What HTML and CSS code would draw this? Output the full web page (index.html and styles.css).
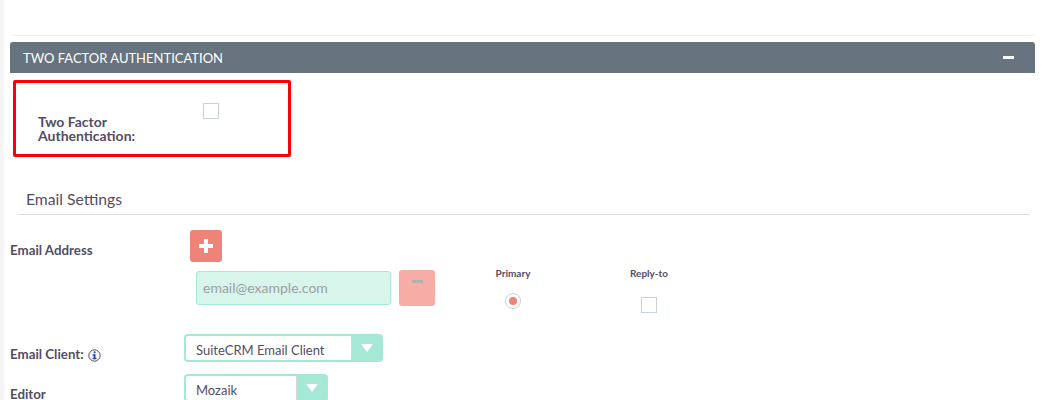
FILE: index.html
```html
<!DOCTYPE html>
<html lang="en">
<head>
    <meta charset="UTF-8">
    <title>Two Factor Authentication</title>
    <link rel="stylesheet" href="styles.css">
</head>
<body>
    <div class="page">
        <div class="top-panel"></div>

        <div class="panel-heading">
            <span>TWO FACTOR AUTHENTICATION</span>
            <span class="collapse-icon"></span>
        </div>

        <div class="highlight-box">
            <label class="factor-label">Two Factor Authentication:</label>
            <span class="check factor-check"></span>
        </div>

        <h2 class="section-title">Email Settings</h2>

        <div class="address-row">
            <div class="row-label address-label">Email Address</div>
            <div class="address-fields">
                <button class="btn-add" type="button">
                    <svg width="16" height="16" viewBox="0 0 16 16"><path d="M6 1h4v5h5v4h-5v5H6v-5H1V6h5z" fill="#fff"/></svg>
                </button>
                <div class="address-line">
                    <div class="email-input">email@example.com</div>
                    <button class="btn-remove" type="button"><span></span></button>
                    <div class="flag-col primary-col">
                        <div class="flag-title">Primary</div>
                        <span class="radio"><span></span></span>
                    </div>
                    <div class="flag-col reply-col">
                        <div class="flag-title">Reply-to</div>
                        <span class="check"></span>
                    </div>
                </div>
            </div>
        </div>

        <div class="select-row client-row">
            <div class="row-label">
                Email Client:
                <svg class="info-icon" width="13" height="13" viewBox="0 0 13 13">
                    <circle cx="6.5" cy="6.5" r="5.7" fill="#f4f4f4" stroke="#555" stroke-width="1"/>
                    <rect x="5.7" y="2.5" width="1.8" height="1.7" fill="#1c44b0"/>
                    <path d="M4.6 5.2h2.9v3.9h1v1.2H4.6V9.1h1V6.4h-1z" fill="#1c44b0"/>
                </svg>
            </div>
            <div class="select client-select">
                <span class="select-value">SuiteCRM Email Client</span>
                <span class="select-arrow"></span>
            </div>
        </div>

        <div class="select-row editor-row">
            <div class="row-label">Editor</div>
            <div class="select editor-select">
                <span class="select-value">Mozaik</span>
                <span class="select-arrow"></span>
            </div>
        </div>
    </div>
</body>
</html>
```

FILE: styles.css
```css
html, body {
    margin: 0;
    padding: 0;
    height: 400px;
    overflow: hidden;
    background: #fff;
}
body {
    font-family: Lato, "Open Sans", sans-serif;
    color: #534d64;
}
.page {
    height: 400px;
    box-sizing: border-box;
    margin-left: 4px;
    padding: 0 7px 0 6px;
    overflow: hidden;
    background: #fff;
    box-shadow: -4px 0 0 #f5f5f5;
}
.top-panel {
    height: 35px;
    border-bottom: 1px solid #f0f0f0;
    border-radius: 0 0 4px 4px;
}
.panel-heading {
    display: flex;
    justify-content: space-between;
    align-items: center;
    height: 31px;
    margin-top: 6px;
    padding: 0 21px 0 13px;
    background: #67737e;
    border-radius: 3px 3px 0 0;
    color: #fff;
    font-size: 13px;
}
.collapse-icon {
    width: 11px;
    height: 3px;
    background: #fff;
}
.highlight-box {
    position: relative;
    box-sizing: border-box;
    width: 278px;
    height: 77px;
    margin: 7px 0 0 3px;
    padding: 32px 0 0 22px;
    border: 3px solid #ff0000;
    border-radius: 2px;
}
.factor-label {
    display: block;
    width: 120px;
    font-size: 14px;
    font-weight: 700;
    line-height: 14px;
}
.check {
    display: block;
    box-sizing: border-box;
    width: 16px;
    height: 16px;
    background: #fff;
    border: 1px solid #c8d0d9;
}
.factor-check {
    position: absolute;
    left: 187px;
    top: 20px;
}
.section-title {
    height: 24px;
    margin: 33px 5px 0 7px;
    padding-left: 9px;
    border-bottom: 1px solid #dcdcdc;
    font-size: 15.7px;
    font-weight: 400;
    line-height: 19px;
}
.row-label {
    width: 180px;
    flex: none;
    font-size: 13.3px;
    font-weight: 700;
}
.address-row {
    display: flex;
    margin-top: 15px;
}
.address-label {
    padding-top: 12px;
}
.btn-add {
    display: flex;
    align-items: center;
    justify-content: center;
    width: 32px;
    height: 32px;
    padding: 0;
    background: #f08377;
    border: none;
    border-radius: 3px;
}
.address-line {
    display: flex;
    margin: 8px 0 0 6px;
    align-items: flex-start;
}
.email-input {
    box-sizing: border-box;
    width: 195px;
    height: 34px;
    margin-top: 1px;
    padding: 0 6px;
    background: #d8f5ec;
    border: 1px solid #a5e8d6;
    border-radius: 3px;
    color: #9a9fa3;
    font-size: 14px;
    line-height: 32px;
}
.btn-remove {
    display: flex;
    justify-content: center;
    width: 36px;
    height: 36px;
    margin-left: 8px;
    padding: 10px 0 0;
    background: #f5ada6;
    border: none;
    border-radius: 3px;
}
.btn-remove span {
    width: 11px;
    height: 3px;
    background: #b5b0ac;
}
.flag-col {
    display: flex;
    flex-direction: column;
    align-items: center;
    width: 80px;
}
.primary-col {
    margin-left: 38px;
}
.reply-col {
    margin-left: 56px;
}
.flag-title {
    font-size: 10px;
    font-weight: 700;
    line-height: 12px;
    margin-top: -3px;
}
.radio {
    display: flex;
    align-items: center;
    justify-content: center;
    box-sizing: border-box;
    width: 16px;
    height: 16px;
    margin-top: 14px;
    border: 1px solid #c8d0d9;
    border-radius: 50%;
}
.radio span {
    width: 8px;
    height: 8px;
    background: #f08377;
    border-radius: 50%;
}
.reply-col .check {
    margin-top: 18px;
}
.select-row {
    display: flex;
    margin-left: 0;
}
.client-row {
    margin-top: 21px;
}
.editor-row {
    margin-top: 12px;
}
.select-row .row-label {
    width: 174px;
    padding-top: 12px;
}
.info-icon {
    vertical-align: -3px;
    margin-left: 1px;
}
.select {
    display: flex;
    box-sizing: border-box;
    height: 28px;
    background: #fff;
    border: 2px solid #a5e8d6;
    border-radius: 4px;
    font-size: 13px;
}
.client-select {
    width: 199px;
}
.editor-select {
    width: 144px;
}
.select-value {
    flex: 1;
    padding-left: 10px;
    font-size: 13px;
    line-height: 28px;
}
.select-arrow {
    position: relative;
    width: 29px;
    flex: none;
    background: #a5e8d6;
    border-left: 1px solid #d6d6d6;
}
.select-arrow::after {
    content: "";
    position: absolute;
    left: 9px;
    top: 8px;
    border-left: 6px solid transparent;
    border-right: 6px solid transparent;
    border-top: 8px solid #fff;
}
```
